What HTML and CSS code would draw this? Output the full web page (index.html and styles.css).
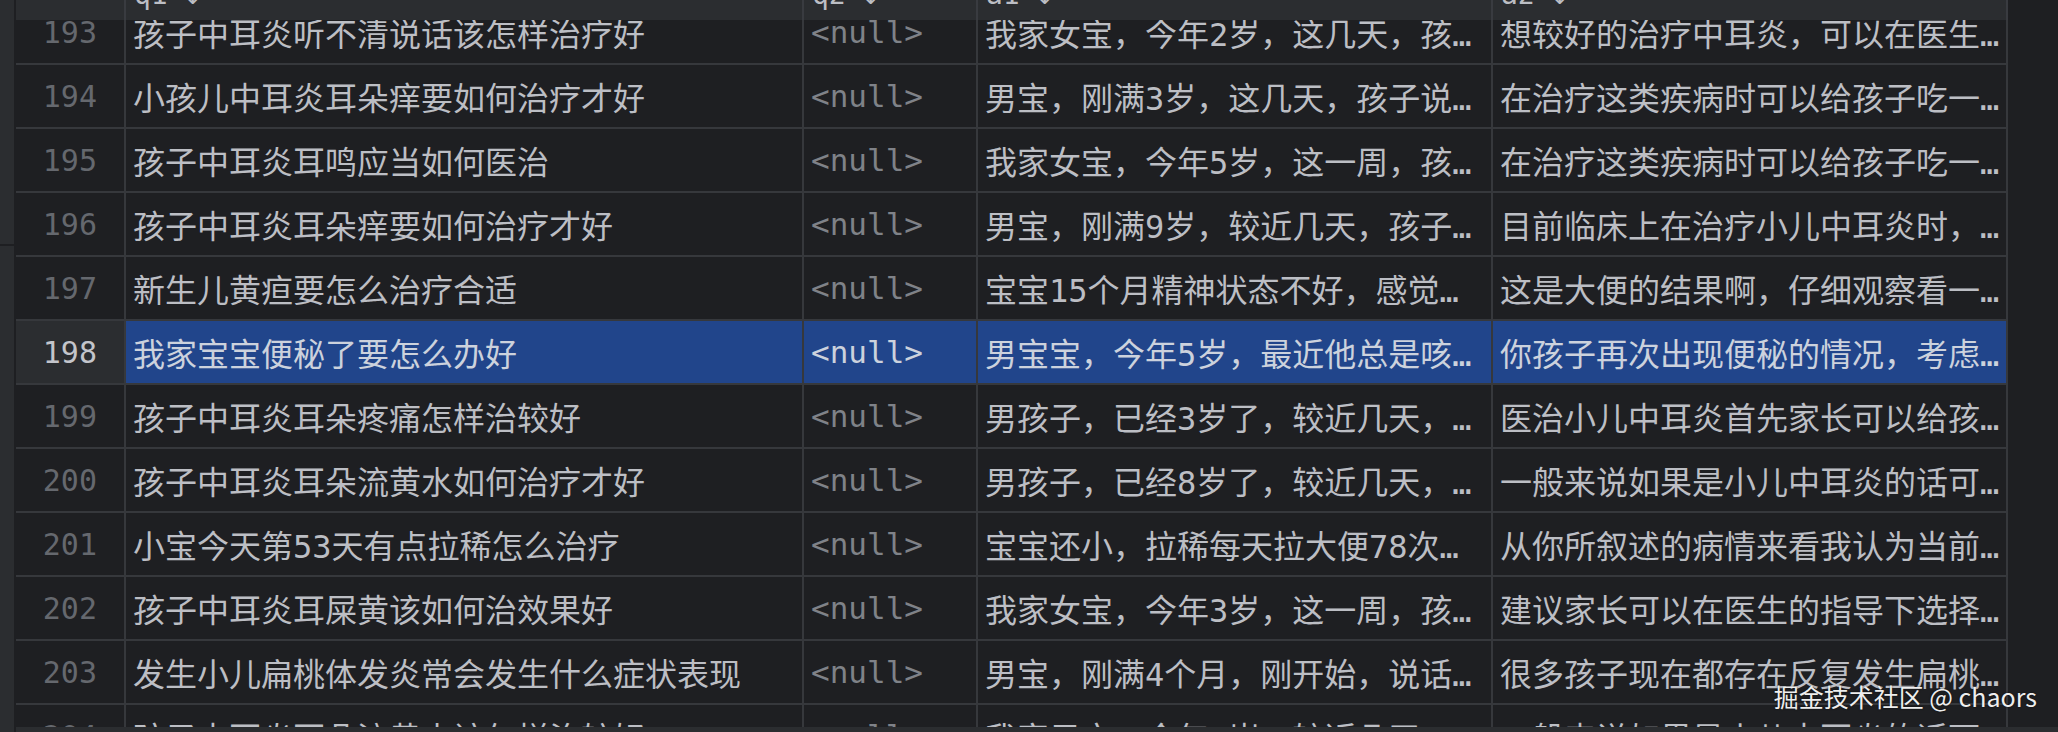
FILE: index.html
```html
<!DOCTYPE html>
<html lang="zh-CN">
<head>
<meta charset="utf-8">
<title>DataGrip result</title>
<link rel="stylesheet" href="styles.css">
</head>
<body>
<div class="app">
  <aside class="gutter"><span class="tick"></span></aside>
  <main class="main">
    <div class="viewport">
      <div class="header">
        <div class="hcell num"></div>
        <div class="hcell c1"><span class="hlabel">q1 ↕</span></div>
        <div class="hcell c2"><span class="hlabel">q2 ↕</span></div>
        <div class="hcell c3"><span class="hlabel">a1 ↕</span></div>
        <div class="hcell c4"><span class="hlabel">a2 ↕</span></div>
      </div>
      <div class="rows">
        <div class="row"><div class="cell num">193</div><div class="cell c1 text">孩子中耳炎听不清说话该怎样治疗好</div><div class="cell c2 null">&lt;null&gt;</div><div class="cell c3 text">我家女宝，今年2岁，这几天，孩…</div><div class="cell c4 text">想较好的治疗中耳炎，可以在医生…</div></div>
        <div class="row"><div class="cell num">194</div><div class="cell c1 text">小孩儿中耳炎耳朵痒要如何治疗才好</div><div class="cell c2 null">&lt;null&gt;</div><div class="cell c3 text">男宝，刚满3岁，这几天，孩子说…</div><div class="cell c4 text">在治疗这类疾病时可以给孩子吃一…</div></div>
        <div class="row"><div class="cell num">195</div><div class="cell c1 text">孩子中耳炎耳鸣应当如何医治</div><div class="cell c2 null">&lt;null&gt;</div><div class="cell c3 text">我家女宝，今年5岁，这一周，孩…</div><div class="cell c4 text">在治疗这类疾病时可以给孩子吃一…</div></div>
        <div class="row"><div class="cell num">196</div><div class="cell c1 text">孩子中耳炎耳朵痒要如何治疗才好</div><div class="cell c2 null">&lt;null&gt;</div><div class="cell c3 text">男宝，刚满9岁，较近几天，孩子…</div><div class="cell c4 text">目前临床上在治疗小儿中耳炎时，…</div></div>
        <div class="row"><div class="cell num">197</div><div class="cell c1 text">新生儿黄疸要怎么治疗合适</div><div class="cell c2 null">&lt;null&gt;</div><div class="cell c3 text">宝宝15个月精神状态不好，感觉…</div><div class="cell c4 text">这是大便的结果啊，仔细观察看一…</div></div>
        <div class="row sel"><div class="cell num">198</div><div class="cell c1 text">我家宝宝便秘了要怎么办好</div><div class="cell c2 null">&lt;null&gt;</div><div class="cell c3 text">男宝宝，今年5岁，最近他总是咳…</div><div class="cell c4 text">你孩子再次出现便秘的情况，考虑…</div></div>
        <div class="row"><div class="cell num">199</div><div class="cell c1 text">孩子中耳炎耳朵疼痛怎样治较好</div><div class="cell c2 null">&lt;null&gt;</div><div class="cell c3 text">男孩子，已经3岁了，较近几天，…</div><div class="cell c4 text">医治小儿中耳炎首先家长可以给孩…</div></div>
        <div class="row"><div class="cell num">200</div><div class="cell c1 text">孩子中耳炎耳朵流黄水如何治疗才好</div><div class="cell c2 null">&lt;null&gt;</div><div class="cell c3 text">男孩子，已经8岁了，较近几天，…</div><div class="cell c4 text">一般来说如果是小儿中耳炎的话可…</div></div>
        <div class="row"><div class="cell num">201</div><div class="cell c1 text">小宝今天第53天有点拉稀怎么治疗</div><div class="cell c2 null">&lt;null&gt;</div><div class="cell c3 text">宝宝还小，拉稀每天拉大便78次…</div><div class="cell c4 text">从你所叙述的病情来看我认为当前…</div></div>
        <div class="row"><div class="cell num">202</div><div class="cell c1 text">孩子中耳炎耳屎黄该如何治效果好</div><div class="cell c2 null">&lt;null&gt;</div><div class="cell c3 text">我家女宝，今年3岁，这一周，孩…</div><div class="cell c4 text">建议家长可以在医生的指导下选择…</div></div>
        <div class="row"><div class="cell num">203</div><div class="cell c1 text">发生小儿扁桃体发炎常会发生什么症状表现</div><div class="cell c2 null">&lt;null&gt;</div><div class="cell c3 text">男宝，刚满4个月，刚开始，说话…</div><div class="cell c4 text">很多孩子现在都存在反复发生扁桃…</div></div>
        <div class="row"><div class="cell num">204</div><div class="cell c1 text">孩子中耳炎耳朵流黄水该怎样治较好</div><div class="cell c2 null">&lt;null&gt;</div><div class="cell c3 text">我家男宝，今年3岁，较近几天，…</div><div class="cell c4 text">一般来说如果是小儿中耳炎的话可…</div></div>
      </div>
    </div>
    <div class="hscroll"></div>
  </main>
  <div class="watermark">掘金技术社区 @ chaors</div>
</div>
</body>
</html>
```

FILE: styles.css
```css
html, body {
  margin: 0;
  height: 100%;
  background: #1e1f22;
  overflow: hidden;
}

.app {
  position: relative;
  display: flex;
  height: 732px;
}

.gutter {
  width: 16px;
  flex: none;
  background: #2b2d30;
  border-right: 2px solid #1e1f22;
  display: flex;
  flex-direction: column;
  padding-top: 244px;
  box-sizing: border-box;
}

.tick {
  display: block;
  height: 2px;
  background: #1e1f22;
}

.main {
  flex: 1;
  min-width: 0;
  display: flex;
  flex-direction: column;
}

.viewport {
  flex: 1;
  overflow: hidden;
  background: #1e1f22;
}

.hscroll {
  height: 5px;
  flex: none;
  background: #2b2d30;
}

.header {
  position: relative;
  z-index: 1;
  display: flex;
  height: 20px;
}

.hcell {
  box-sizing: border-box;
  height: 20px;
  background: #2b2d30;
  border-right: 2px solid #393b40;
  overflow: hidden;
  padding-left: 8px;
  flex: none;
}

.hlabel {
  display: block;
  margin-top: -22px;
  font: 28px "DejaVu Sans Mono", monospace;
  color: #bcbec4;
  white-space: nowrap;
}

.rows {
  margin-top: -19px;
}

.row {
  display: flex;
  height: 64px;
}

.num { width: 110px; }
.c1 { width: 678px; }
.c2 { width: 174px; }
.c3 { width: 515px; }
.c4 { width: 515px; }

.cell {
  box-sizing: border-box;
  flex: none;
  height: 64px;
  border-right: 2px solid #36383c;
  border-bottom: 2px solid #36383c;
  display: flex;
  align-items: center;
  white-space: nowrap;
  overflow: hidden;
  padding-left: 7px;
}

.cell.num {
  justify-content: flex-end;
  padding: 0 27px 0 0;
  font: 30px "DejaVu Sans Mono", monospace;
  color: #65686e;
}

.text {
  font-family: "DejaVu Sans Mono", "Noto Sans CJK SC", monospace;
  font-size: 32px;
  color: #bcbec4;
}

.null {
  font: 31px "DejaVu Sans Mono", monospace;
  color: #7f8288;
}

.row.sel .cell {
  background: #21458b;
  color: #ccd2dd;
}

.row.sel .cell.num {
  background: #2b2d30;
  color: #c3c5cb;
}

.watermark {
  position: absolute;
  right: 21px;
  top: 678px;
  font: 25px "Noto Sans CJK SC", sans-serif;
  color: #eeeeee;
  text-shadow: 0 0 2px rgba(0, 0, 0, 0.7);
  white-space: nowrap;
}
```
